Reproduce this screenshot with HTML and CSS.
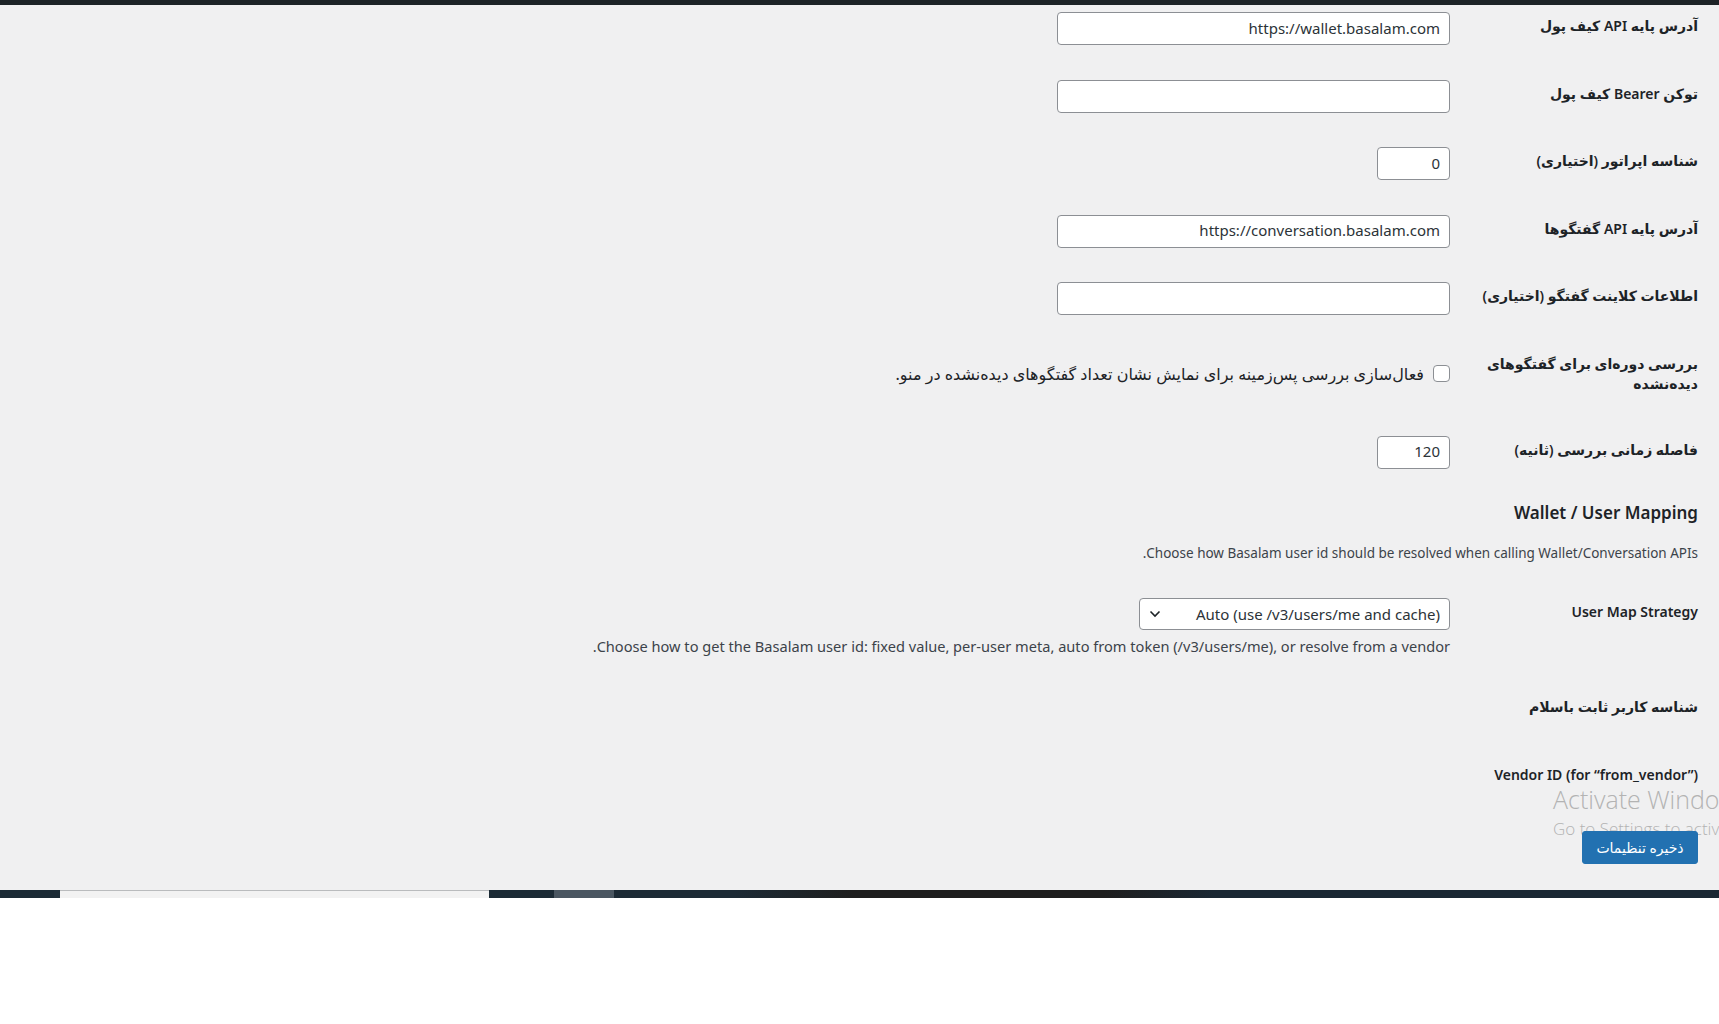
FILE: index.html
```html
<!DOCTYPE html>
<html lang="fa" dir="rtl">
  <head>
    <meta charset="UTF-8" />
    <meta name="viewport" content="width=device-width, initial-scale=1.0" />
    <title>تنظیمات باسلام</title>
    <link rel="stylesheet" href="styles.css">
  </head>
  <body>
    <div class="screen">
      <div class="adminbar"></div>

      <form class="wrap" onsubmit="event.preventDefault()">
        <div class="form-table">
          <div class="row">
            <label class="row-label" for="walletBase">آدرس پایه API کیف پول</label>
            <div class="row-field">
              <input type="text" id="walletBase" class="regular-text" value="https://wallet.basalam.com" />
            </div>
          </div>

          <div class="row">
            <label class="row-label" for="walletToken">توکن Bearer کیف پول</label>
            <div class="row-field">
              <input type="text" id="walletToken" class="regular-text" />
            </div>
          </div>

          <div class="row">
            <label class="row-label" for="operatorId">شناسه اپراتور (اختیاری)</label>
            <div class="row-field">
              <input type="text" id="operatorId" class="small-text" value="0" />
            </div>
          </div>

          <div class="row">
            <label class="row-label" for="chatBase">آدرس پایه API گفتگوها</label>
            <div class="row-field">
              <input type="text" id="chatBase" class="regular-text" value="https://conversation.basalam.com" />
            </div>
          </div>

          <div class="row">
            <label class="row-label" for="chatClient">اطلاعات کلاینت گفتگو (اختیاری)</label>
            <div class="row-field">
              <input type="text" id="chatClient" class="regular-text" />
            </div>
          </div>

          <div class="row row-tall">
            <div class="row-label">بررسی دوره‌ای برای گفتگوهای دیده‌نشده</div>
            <div class="row-field field-check">
              <label class="check">
                <input type="checkbox" id="pollUnread" />
                <span>فعال‌سازی بررسی پس‌زمینه برای نمایش نشان تعداد گفتگوهای دیده‌نشده در منو.</span>
              </label>
            </div>
          </div>

          <div class="row">
            <label class="row-label" for="pollInterval">فاصله زمانی بررسی (ثانیه)</label>
            <div class="row-field">
              <input type="text" id="pollInterval" class="small-text" value="120" />
            </div>
          </div>
        </div>

        <h2 class="section-title">Wallet / User Mapping</h2>
        <p class="section-desc">Choose how Basalam user id should be resolved when calling Wallet/Conversation APIs.</p>

        <div class="form-table">
          <div class="row">
            <label class="row-label" for="mapStrategy">User Map Strategy</label>
            <div class="row-field">
              <div class="select-wrap">
                <select id="mapStrategy">
                  <option>Auto (use /v3/users/me and cache)&lrm;</option>
                  <option>Fixed user id&lrm;</option>
                  <option>Per-user meta&lrm;</option>
                  <option>From vendor&lrm;</option>
                </select>
                <svg class="chevron" width="12" height="8" viewBox="0 0 12 8">
                  <path d="M1.5 1.5 L6 6 L10.5 1.5" fill="none" stroke="#1d2327" stroke-width="1.6" />
                </svg>
              </div>
              <p class="field-desc">Choose how to get the Basalam user id: fixed value, per-user meta, auto from token (/v3/users/me), or resolve from a vendor.</p>
            </div>
          </div>

          <div class="row">
            <div class="row-label">شناسه کاربر ثابت باسلام</div>
            <div class="row-field"></div>
          </div>

          <div class="row">
            <div class="row-label nowrap"><bdi dir="ltr">Vendor ID (for “from_vendor”)</bdi></div>
            <div class="row-field"></div>
          </div>
        </div>

        <div class="submit">
          <button type="submit" class="button-primary">ذخیره تنظیمات</button>
        </div>
      </form>

      <div class="activate" dir="ltr">
        <div class="activate-title">Activate Windows</div>
        <div class="activate-sub">Go to Settings to activate Windows.</div>
      </div>
    </div>

    <!-- taskbar strip under the window -->
    <div class="strip" dir="ltr">
      <div class="strip-dark"></div>
      <div class="strip-light"></div>
      <div class="strip-dark strip-mid"></div>
      <div class="strip-gray"></div>
      <div class="strip-rest"></div>
    </div>
  </body>
</html>
```

FILE: styles.css
```css
body {
  margin: 0;
  background-color: #fff;
  font-family: "Noto Sans", "DejaVu Sans", sans-serif;
  font-size: 14px;
  color: #1d2327;
}

.screen {
  position: relative;
  height: 890px;
  background-color: #f0f0f1;
  overflow: hidden;
}

.adminbar {
  height: 5px;
  background-color: #1d2327;
}

.wrap {
  padding: 0 21px 0 0;
  margin: 0;
}

/* Settings rows */
.row {
  display: flex;
  align-items: flex-start;
  gap: 28px;
  padding: 17.25px 0;
}

.form-table:first-child .row:first-child {
  padding-top: 7px;
}

.row-label {
  width: 220px;
  flex: none;
  padding-top: 4px;
  font-size: 14px;
  font-weight: 600;
  line-height: 20px;
}

.nowrap {
  white-space: nowrap;
}

.row-tall .row-label {
  padding-bottom: 7.5px;
}

.row-field {
  min-height: 33px;
}

input[type="text"] {
  box-sizing: border-box;
  height: 33px;
  padding: 0 9px 2px;
  border: 1px solid #8c8f94;
  border-radius: 4px;
  background-color: #fff;
  font-family: inherit;
  font-size: 15px;
  color: #2c3338;
  display: block;
}

.regular-text {
  width: 393px;
}

.small-text {
  width: 73px;
}

/* Checkbox row */
.field-check {
  padding-top: 14px;
}

.check {
  display: flex;
  align-items: center;
  gap: 9px;
  font-size: 16px;
  line-height: 20px;
}

.check input {
  appearance: none;
  width: 17px;
  height: 17px;
  margin: 0;
  border: 1px solid #8c8f94;
  border-radius: 4px;
  background-color: #fff;
  flex: none;
}

/* Section heading */
.section-title {
  margin: 14.5px 0 0;
  font-size: 17px;
  font-weight: 600;
  line-height: 25px;
}

.section-desc {
  margin: 17.5px 0 17.75px;
  font-size: 13.5px;
  line-height: 20px;
  color: #3c434a;
}

/* Select */
.select-wrap {
  position: relative;
  width: 311px;
}

.select-wrap select {
  appearance: none;
  width: 100%;
  height: 32px;
  padding: 0 9px 0 30px;
  border: 1px solid #8c8f94;
  border-radius: 4px;
  background-color: #fff;
  font-family: inherit;
  font-size: 15px;
  color: #2c3338;
}

.chevron {
  position: absolute;
  left: 10px;
  top: 12px;
}

.field-desc {
  margin: 6px 0 3px;
  font-size: 14.6px;
  line-height: 20px;
  color: #3c434a;
  white-space: nowrap;
}

/* Save button */
.submit {
  margin-top: 20px;
}

.button-primary {
  position: relative;
  z-index: 2;
  height: 33px;
  width: 116px;
  padding: 0;
  border: 1px solid #2271b1;
  border-radius: 3px;
  background-color: #2271b1;
  color: #fff;
  font-family: inherit;
  font-size: 14px;
  cursor: pointer;
}

/* Windows activation watermark */
.activate {
  position: absolute;
  left: 1553px;
  top: 783px;
  z-index: 1;
  white-space: nowrap;
  color: #b3b3b3;
  font-family: "Open Sans", "Noto Sans", sans-serif;
  font-weight: 300;
}

.activate-title {
  font-size: 25px;
  line-height: 32px;
}

.activate-sub {
  font-size: 17px;
  line-height: 27px;
}

/* Bottom strip */
.strip {
  display: flex;
  height: 8px;
}

.strip-dark {
  width: 60px;
  background-color: #1b2a35;
}

.strip-light {
  width: 429px;
  box-sizing: border-box;
  border-top: 1px solid #b9bbbd;
  background-color: #f2f2f2;
}

.strip-mid {
  width: 65px;
}

.strip-gray {
  width: 60px;
  background-color: #4a5661;
}

.strip-rest {
  flex: 1;
  background: linear-gradient(to right, #1c2a35 0, #1c2a35 120px, #1e1e1e 240px, #1e1e1e 490px, #1a2733 600px, #1a2733 100%);
}
```
